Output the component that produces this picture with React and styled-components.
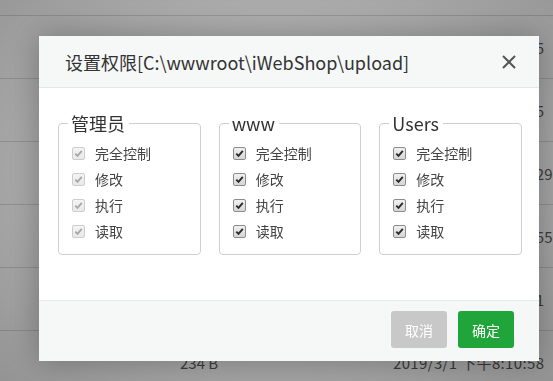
import React from 'react';
import styled, { createGlobalStyle } from 'styled-components';

const GlobalStyle = createGlobalStyle`
  html, body {
    margin: 0;
    padding: 0;
    background: #fff;
    overflow: hidden;
  }
  body {
    font-family: "Noto Sans CJK SC", "Noto Sans", sans-serif;
    color: #333;
  }
`;

const groups = [
  { name: '管理员', disabled: true },
  { name: 'www', disabled: false },
  { name: 'Users', disabled: false },
];

const perms = ['完全控制', '修改', '执行', '读取'];

// rows of the file list behind the dialog; only the last one shows its size
const rows = [
  { size: '', date: '2019/3/1 下午8:10:45' },
  { size: '', date: '2019/3/1 下午8:10:35' },
  { size: '', date: '2019/3/12 下午8:10:29' },
  { size: '', date: '2019/3/12 下午8:10:55' },
  { size: '', date: '2019/3/1 下午8:10:51' },
  { size: '234 B', date: '2019/3/1 下午8:10:58' },
];

function Check({ disabled }) {
  return (
    <CheckBox $disabled={disabled}>
      <svg width="9" height="9" viewBox="0 0 9 9">
        <path d="M1.3 4.6 L3.5 6.9 L7.8 1.8" fill="none"
          stroke={disabled ? '#a9a9a9' : '#2b2b2b'} strokeWidth="1.9" />
      </svg>
    </CheckBox>
  );
}

function App() {
  return (
    <>
      <GlobalStyle />
      <Page>
        <TopStrip />
        {rows.map((r, i) => (
          <Row key={i}>
            <Cell>{r.size}</Cell>
            <DateCell>{r.date}</DateCell>
          </Row>
        ))}
      </Page>
      <Overlay />
      <Modal>
        <Header>
          <Title>{'设置权限[C:\\wwwroot\\iWebShop\\upload]'}</Title>
          <Close>
            <svg width="14" height="14" viewBox="0 0 14 14">
              <path d="M1 1 L13 13 M13 1 L1 13" stroke="#555" strokeWidth="2" />
            </svg>
          </Close>
        </Header>
        <Body>
          {groups.map((g) => (
            <Group key={g.name}>
              <Legend>{g.name}</Legend>
              {perms.map((p) => (
                <Item key={p} $disabled={g.disabled}>
                  <Check disabled={g.disabled} />
                  {p}
                </Item>
              ))}
            </Group>
          ))}
        </Body>
        <Footer>
          <Button $kind="cancel">取消</Button>
          <Button $kind="ok">确定</Button>
        </Footer>
      </Modal>
    </>
  );
}

export default App;

const Page = styled.div`
  width: 553px;
  height: 381px;
  overflow: hidden;
`;

const TopStrip = styled.div`
  height: 16px;
  border-bottom: 1px solid #ddd;
  box-sizing: border-box;
`;

const Row = styled.div`
  display: grid;
  grid-template-columns: 213px 1fr;
  align-items: center;
  height: 63px;
  box-sizing: border-box;
  padding-left: 180px;
  border-bottom: 1px solid #ddd;
  font-size: 15px;
  color: #5e5e5e;
  white-space: nowrap;
`;

const Cell = styled.div`
  overflow: visible;
`;

const DateCell = styled.div`
  letter-spacing: 0.35px;
`;

const Overlay = styled.div`
  position: fixed;
  inset: 0;
  background: radial-gradient(ellipse 75% 80% at 50% 45%, rgba(0, 0, 0, 0.31) 45%, rgba(0, 0, 0, 0.43) 100%);
`;

const Modal = styled.div`
  position: fixed;
  left: 39px;
  top: 36px;
  width: 500px;
  background: #fff;
  box-shadow: 0 0 30px rgba(0, 0, 0, 0.3);
  display: flex;
  flex-direction: column;
`;

const Header = styled.div`
  height: 52px;
  box-sizing: border-box;
  background: #f6f8f8;
  border-bottom: 1px solid #e6e6e6;
  display: flex;
  align-items: center;
  justify-content: space-between;
  padding: 0 23px 0 26px;
`;

const Title = styled.div`
  font-size: 18px;
  color: #333;
  white-space: nowrap;
`;

const Close = styled.div`
  display: flex;
  align-items: center;
  cursor: pointer;
`;

const Body = styled.div`
  display: grid;
  grid-template-columns: repeat(3, 1fr);
  gap: 18px;
  padding: 23px 17px 45px 19px;
`;

const Group = styled.fieldset`
  margin: 0;
  padding: 5px 0 10px 10px;
  border: 1px solid #cfcfcf;
  border-radius: 4px;
  min-width: 0;
`;

const Legend = styled.legend`
  font-size: 18px;
  line-height: 24px;
  padding: 0 4px 0 3px;
  margin-left: -1px;
  color: #333;
`;

const Item = styled.div`
  display: flex;
  align-items: center;
  height: 26px;
  font-size: 14px;
  color: #444;
  padding-left: 3px;
`;

const CheckBox = styled.span`
  width: 13px;
  height: 13px;
  box-sizing: border-box;
  margin-right: 10px;
  border-radius: 2px;
  border: 1px solid ${(p) => (p.$disabled ? '#cdcdcd' : '#8c8c8c')};
  background: ${(p) =>
    p.$disabled
      ? 'linear-gradient(#f4f4f4, #e9e9e9)'
      : 'linear-gradient(#f0f0f0, #d6d6d6)'};
  display: flex;
  align-items: center;
  justify-content: center;
`;

const Footer = styled.div`
  height: 61px;
  box-sizing: border-box;
  background: #f6f8f8;
  border-top: 1px solid #e8eaea;
  display: flex;
  justify-content: flex-end;
  align-items: flex-start;
  gap: 11px;
  padding: 10px 25px 0 0;
`;

const Button = styled.div`
  width: 56px;
  height: 37px;
  border-radius: 3px;
  display: flex;
  align-items: center;
  justify-content: center;
  font-size: 14px;
  color: #fff;
  background: ${(p) => (p.$kind === 'ok' ? '#20a53a' : '#c8c8c8')};
  cursor: pointer;
`;
